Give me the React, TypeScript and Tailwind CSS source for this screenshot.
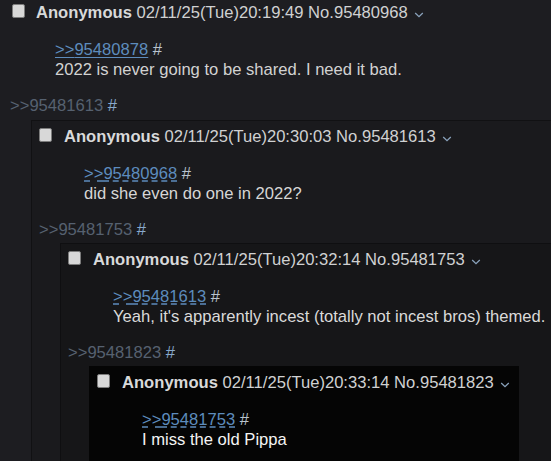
import React from "react";

type PostData = {
    no: string;
    time: string;
    quote: string;
    body: string;
    dashed: boolean;
    text: string;
    backlink?: string;
};

const posts: PostData[] = [
    {
        no: "95480968",
        time: "02/11/25(Tue)20:19:49",
        quote: "95480878",
        body: "2022 is never going to be shared. I need it bad.",
        dashed: false,
        text: "text-[#d2d2d2]",
        backlink: "95481613",
    },
    {
        no: "95481613",
        time: "02/11/25(Tue)20:30:03",
        quote: "95480968",
        body: "did she even do one in 2022?",
        dashed: true,
        text: "text-[#d6d6d6]",
        backlink: "95481753",
    },
    {
        no: "95481753",
        time: "02/11/25(Tue)20:32:14",
        quote: "95481613",
        body: "Yeah, it's apparently incest (totally not incest bros) themed.",
        dashed: true,
        text: "text-[#dadada]",
        backlink: "95481823",
    },
    {
        no: "95481823",
        time: "02/11/25(Tue)20:33:14",
        quote: "95481753",
        body: "I miss the old Pippa",
        dashed: true,
        text: "text-[#f4f4f4]",
    },
];

// one class string per nesting level (index 1..3)
const boxes = [
    "",
    "mt-[4px] bg-[#1a1a1d] border-l border-t border-[#111113]",
    "mt-[3px] bg-[#161618] border-l border-t border-[#0f0f11]",
    "mt-[3px] bg-[#050505] border-l border-t border-[#050505] w-fit pr-[9px]",
];

function Chevron() {
    return (
        <svg width="10" height="6" viewBox="0 0 10 6" className="ml-[6px] mt-[3px] shrink-0">
            <path d="M1.2 1 L5 4.6 L8.8 1" fill="none" stroke="#8aa2bc" strokeWidth="1.3" />
        </svg>
    );
}

function PostBody({ idx }: { idx: number }) {
    const p = posts[idx];
    return (
        <>
            <div className="flex items-center h-[20px]">
                <span
                    className={`w-[13px] h-[14px] mb-[5px] shrink-0 rounded-[2px] bg-[#d8d8d8] border border-[#7c7c7c] ${
                        idx === 0 ? "ml-[2px] mr-[11px]" : "mr-[12px]"
                    }`}
                />
                <span className="text-[#d0d1d2]">
                    <b className="text-[#d8d9da]">Anonymous</b> {p.time} No.{p.no}
                </span>
                <Chevron />
            </div>
            <div className={`mt-[17px] ml-[45px] ${p.text}`}>
                <div>
                    <span
                        className={`text-[#5d8cbd] underline underline-offset-[2px] decoration-[#5d8cbd] ${
                            p.dashed ? "decoration-dashed" : ""
                        }`}
                    >
                        &gt;&gt;{p.quote}
                    </span>{" "}
                    <span className="text-[#b9c3ce]">#</span>
                </div>
                <div>{p.body}</div>
            </div>
            {p.backlink ? (
                <>
                    <div className="mt-[16px]">
                        <span className="text-[#566170]">&gt;&gt;{p.backlink}</span>{" "}
                        <span className="text-[#88a9cc]">#</span>
                    </div>
                    <div className={`ml-[21px] pl-[7px] pt-[6px] ${boxes[idx + 1]}`}>
                        <PostBody idx={idx + 1} />
                    </div>
                </>
            ) : (
                <div className="h-[24px]" />
            )}
        </>
    );
}

export default function App() {
    return (
        <div className="h-[461px] w-[551px] overflow-hidden bg-[#1d1d21] font-['Liberation_Sans',Arial,sans-serif] text-[16.6px] leading-[20px] whitespace-nowrap">
            <div className="pt-[3px] pl-[10px]">
                <PostBody idx={0} />
            </div>
        </div>
    );
}
